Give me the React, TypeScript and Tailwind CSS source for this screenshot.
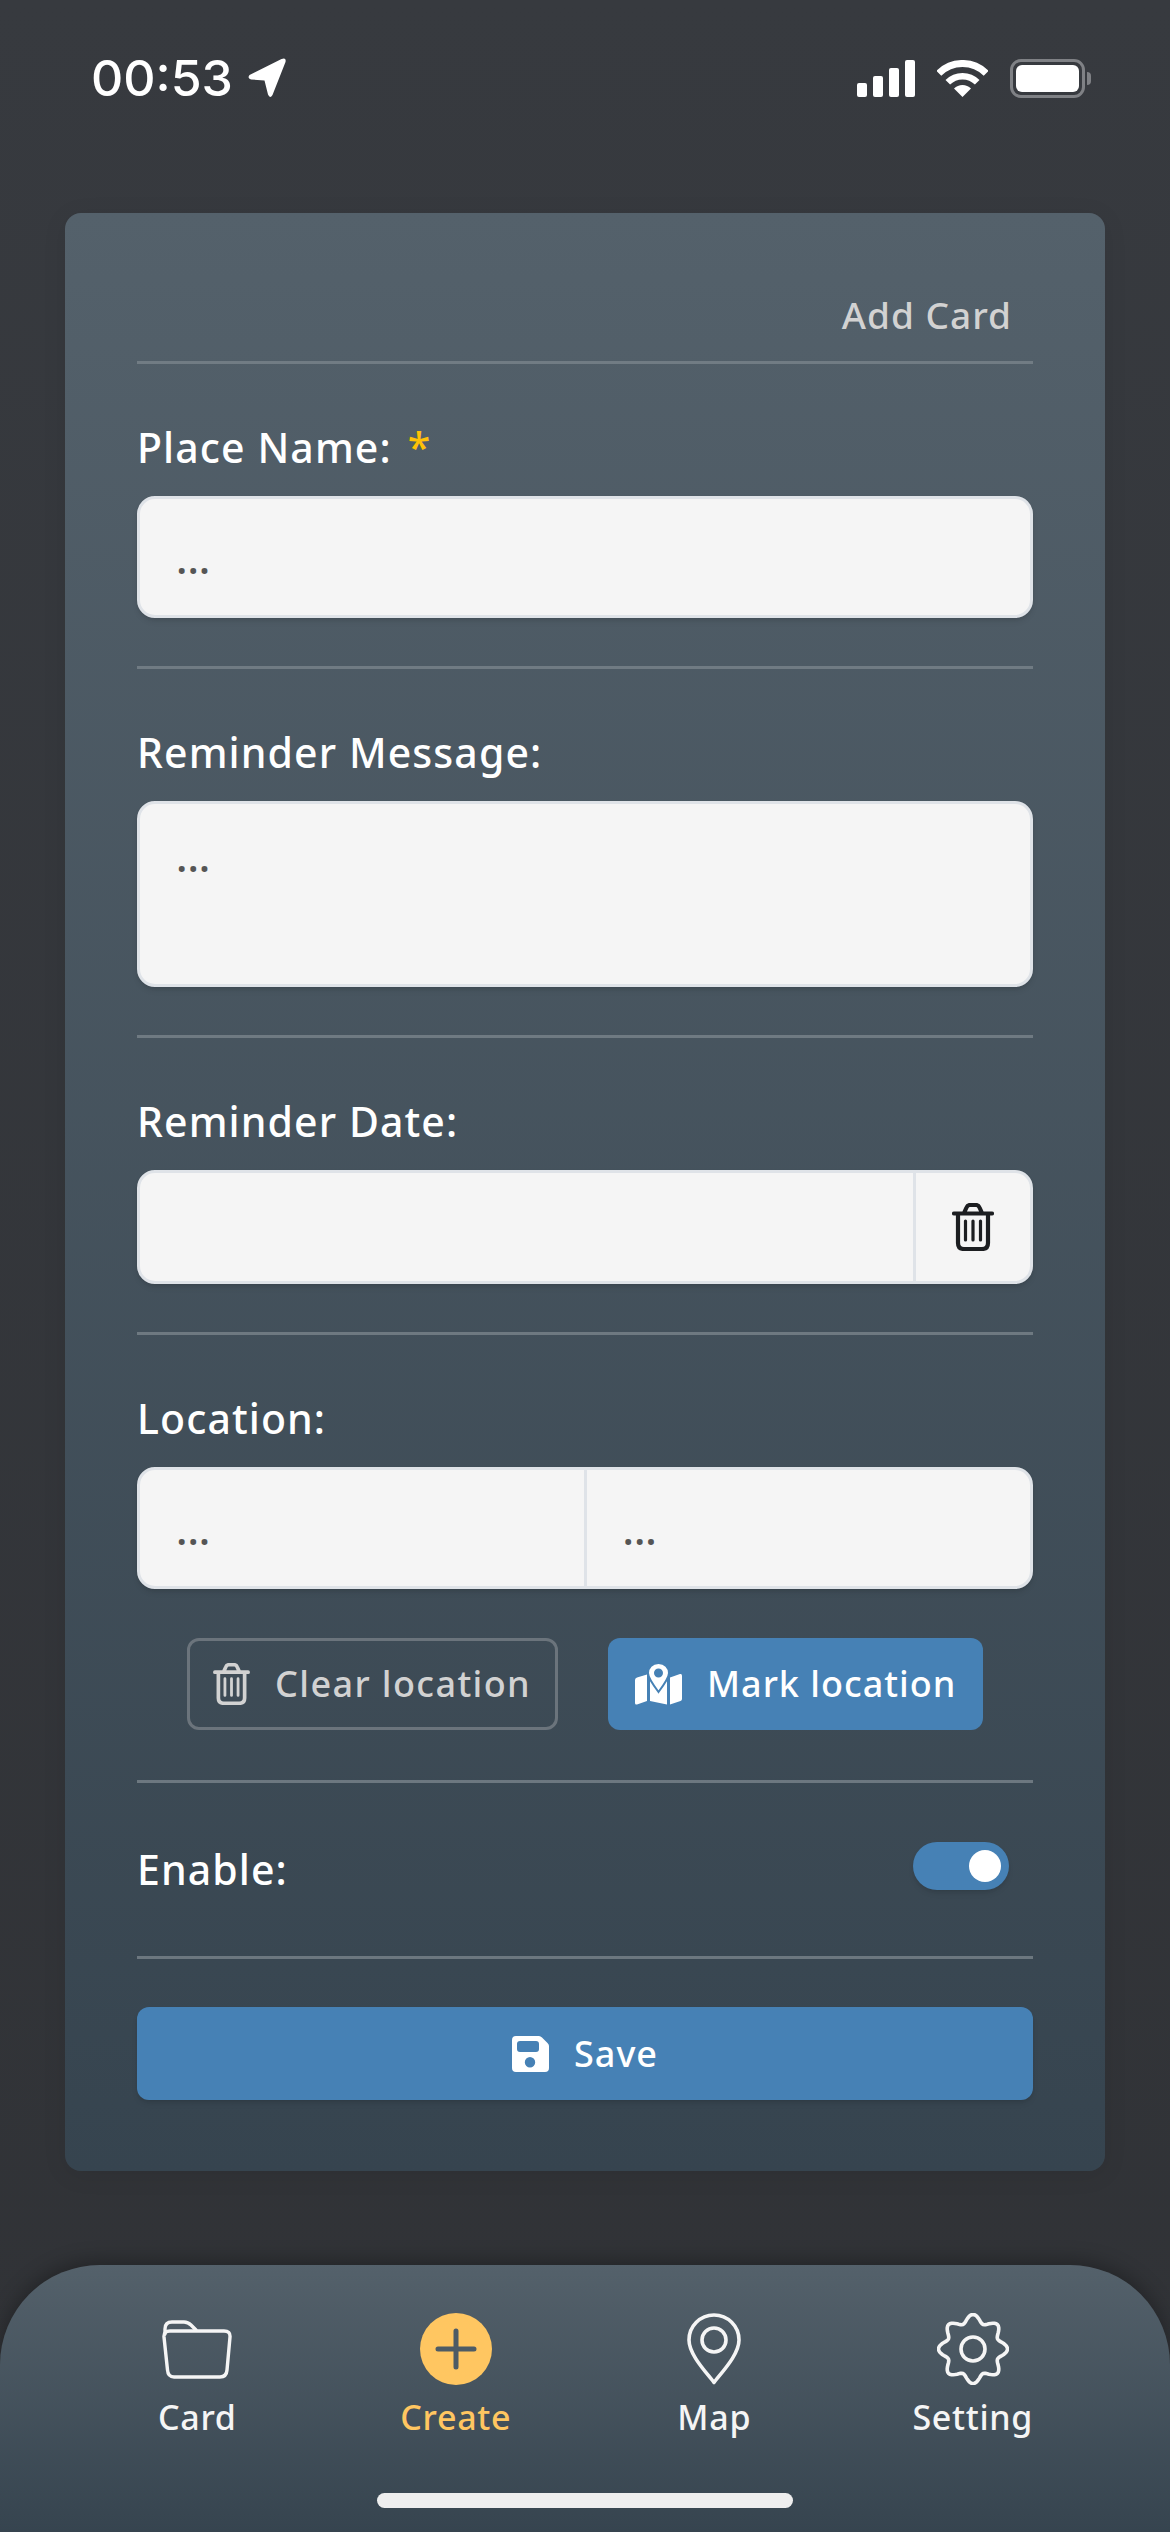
import React from 'react'

const gearPath = () => {
    const pts: string[] = []
    for (let i = 0; i < 144; i++) {
        const a = (i / 144) * Math.PI * 2
        const r = 30.5 + 4 * Math.cos(a * 8)
        pts.push(`${(36 + r * Math.sin(a)).toFixed(2)} ${(36 - r * Math.cos(a)).toFixed(2)}`)
    }
    return `M${pts.join('L')}Z`
}

const TrashIcon = ({ className }: { className: string }) => (
    <svg viewBox="0 0 42 48" className={className} fill="none" stroke="currentColor" strokeLinecap="round" strokeLinejoin="round">
        <path strokeWidth="4.2" d="M2 10.500H40M12 10 14.500 4.500Q15.500 2 18 2H24Q26.500 2 27.500 4.500L30 10M6 11V40Q6 46 12 46H30Q36 46 36 40V11" />
        <path strokeWidth="3.2" d="M13.500 18V37M21 18V37M28.500 18V37" />
    </svg>
)

const MapIcon = () => (
    <svg viewBox="0 0 47 42" className="w-[47px] h-[42px] shrink-0" fill="#fff">
        <path d="M0 17Q0 15 2 14.500L12 11.500V38L2 41.500Q0 42 0 40Z" />
        <path d="M35 14.500 45 11Q47 10.500 47 12.500V36Q47 37.500 45.500 38L35 41.500Z" />
        <path d="M15 14H32V41.500L15 38Z" />
        <path stroke="#4681b5" strokeWidth="2" fillRule="evenodd" d="M23.500 0C17 0 13 4.500 13 10C13 15 19 23 23.500 29C28 23 34 15 34 10C34 4.500 30 0 23.500 0ZM23.500 6.500A3.500 3.500 0 1 1 23.500 13.500A3.500 3.500 0 1 1 23.500 6.500Z" />
    </svg>
)

const SaveIcon = () => (
    <svg viewBox="0 0 37 36" className="w-[37px] h-[36px] shrink-0" fill="#fff">
        <path fillRule="evenodd" d="M4 0H27Q28.500 0 30 1.500L35.500 7Q37 8.500 37 10V32Q37 36 33 36H4Q0 36 0 32V4Q0 0 4 0ZM8 5Q5 5 5 8V13Q5 16 8 16H24Q27 16 27 13V8Q27 5 24 5ZM18 21A5.200 5.200 0 1 0 18 31.400A5.200 5.200 0 1 0 18 21Z" />
    </svg>
)

const FolderIcon = () => (
    <svg viewBox="0 0 70 59" className="w-[70px] h-[59px]" fill="none" stroke="#f5f5f5" strokeWidth="3.4" strokeLinejoin="round" strokeLinecap="round">
        <path d="M8 11H62Q68.500 11 68 17L65 50Q64.500 57 58 57H12Q6 57 5.500 50L2 17Q1.500 11 8 11Z" />
        <path d="M3 14V9Q3 2 10 2H22Q26 2 29 5L34 10" />
    </svg>
)

const PlusIcon = () => (
    <svg viewBox="0 0 72 72" className="w-[72px] h-[72px]">
        <circle cx="36" cy="36" r="36" fill="#ffc661" />
        <path d="M18 36H54M36 18V54" stroke="#4d5b65" strokeWidth="5" strokeLinecap="round" />
    </svg>
)

const PinIcon = () => (
    <svg viewBox="0 0 54 72" className="w-[54px] h-[72px]" fill="none" stroke="#f5f5f5" strokeWidth="3.6" strokeLinejoin="round">
        <path d="M27 69.500C20 60 2 42 2 27A25 25 0 0 1 52 27C52 42 34 60 27 69.500Z" />
        <circle cx="27" cy="27" r="12" />
    </svg>
)

const GearIcon = () => (
    <svg viewBox="0 0 72 72" className="w-[72px] h-[72px]" fill="none" stroke="#f5f5f5" strokeWidth="3.6">
        <path d={gearPath()} />
        <circle cx="36" cy="36" r="12" />
    </svg>
)

const StatusBar = () => (
    <div className="h-[213px] shrink-0 relative font-['Inter',sans-serif] text-white">
        <div className="flex items-center pl-[91px] pt-[50px]">
            <span className="text-[50px] leading-[56px] font-medium">00:53</span>
            <svg viewBox="0 0 40 40" className="w-[40px] h-[40px] ml-[14px]" fill="#fff">
                <path d="M2.500 17 34.500 1Q39.500-1 38.500 4L25.500 37Q23 41 21 36.500L17.500 22.500 4 21.500Q0 20.500 2.500 17Z" />
            </svg>
            <div className="flex items-center ml-auto pr-[79px]">
                <div className="flex items-end gap-[6px] h-[37px]">
                    <div className="w-[10px] h-[14px] bg-white rounded-[2px]" />
                    <div className="w-[10px] h-[21px] bg-white rounded-[2px]" />
                    <div className="w-[10px] h-[29px] bg-white rounded-[2px]" />
                    <div className="w-[10px] h-[37px] bg-white rounded-[2px]" />
                </div>
                <svg viewBox="0 0 51 37" className="w-[51px] h-[37px] ml-[22px]" fill="none" stroke="#fff">
                    <path strokeWidth="7" d="M1.800 13.300A33.500 33.500 0 0 1 49.200 13.300" />
                    <path strokeWidth="6.500" d="M10.800 22.300A20.800 20.800 0 0 1 40.200 22.300" />
                    <path fill="#fff" stroke="none" d="M25.500 37 17 28.500A12 12 0 0 1 34 28.500Z" />
                </svg>
                <div className="flex items-center ml-[22px]">
                    <div className="w-[75px] h-[39px] rounded-[11px] border-[3px] border-[#7f8185] p-[3px]">
                        <div className="w-full h-full bg-white rounded-[6px]" />
                    </div>
                    <div className="w-[4px] h-[13px] bg-[#7f8185] rounded-r-full ml-[2px]" />
                </div>
            </div>
        </div>
    </div>
)

const Label = ({ children }: { children: React.ReactNode }) => (
    <div className="h-[70px] mb-[14px] pt-[2px] flex items-center text-[41px] font-medium tracking-[1.1px] text-white">{children}</div>
)

const Divider = () => <div className="h-[3px] bg-[#79838b]/80" />

const inputClass = "min-w-0 flex-1 h-full bg-transparent outline-none pl-[36px] text-[42px] font-medium placeholder:text-[#555555]"

const TabItem = ({ icon, label, active }: { icon: React.ReactNode; label: string; active?: boolean }) => (
    <div className="flex-1 flex flex-col items-center">
        <div className="h-[72px] flex items-center justify-center">{icon}</div>
        <span className={`mt-[10px] text-[34px] leading-[44px] font-medium tracking-[0.7px] ${active ? 'text-[#ffc661]' : 'text-[#f5f5f5]'}`}>{label}</span>
    </div>
)

const App = () => {
    return (
        <div className="w-[1170px] h-[2532px] overflow-hidden flex flex-col bg-gradient-to-b from-[#373a3f] to-[#303236] font-['Noto_Sans',sans-serif]">
            <StatusBar />

            <div className="mx-[65px] h-[1958px] shrink-0 rounded-[16px] px-[72px] bg-gradient-to-b from-[#54616b] to-[#36444f] shadow-[0_4px_24px_rgba(0,0,0,0.08)]">
                <div className="h-[148px] flex items-end justify-end pb-[21px] pr-[21px] text-[37px] leading-[50px] font-medium tracking-[1px] text-[#d2d2d2]">
                    Add Card
                </div>
                <Divider />

                <div className="pt-[48px] pb-[48px]">
                    <Label>
                        Place Name:<span className="ml-[16px] text-[#ffc107]">*</span>
                    </Label>
                    <div className="h-[122px] rounded-[18px] border-[3px] border-[#dfe3e8] bg-[#f5f5f5] flex shadow-md">
                        <input className={inputClass} placeholder="..." />
                    </div>
                </div>
                <Divider />

                <div className="pt-[48px] pb-[48px]">
                    <Label>Reminder Message:</Label>
                    <textarea
                        className="block w-full h-[186px] resize-none rounded-[18px] border-[3px] border-[#dfe3e8] bg-[#f5f5f5] outline-none pl-[36px] pt-[30px] text-[42px] leading-[44px] font-medium placeholder:text-[#555555] shadow-md"
                        placeholder="..."
                    />
                </div>
                <Divider />

                <div className="pt-[48px] pb-[48px]">
                    <Label>Reminder Date:</Label>
                    <div className="h-[114px] rounded-[18px] border-[3px] border-[#dfe3e8] bg-[#f5f5f5] flex shadow-md">
                        <input className={inputClass} />
                        <div className="w-[117px] h-full border-l-[3px] border-[#dfe3e8] flex items-center justify-center text-[#1c1e21]">
                            <TrashIcon className="w-[42px] h-[48px]" />
                        </div>
                    </div>
                </div>
                <Divider />

                <div className="pt-[48px] pb-[50px]">
                    <Label>Location:</Label>
                    <div className="h-[122px] rounded-[18px] border-[3px] border-[#dfe3e8] bg-[#f5f5f5] flex shadow-md">
                        <input className={inputClass} placeholder="..." />
                        <input className={`${inputClass} border-l-[3px] border-[#dfe3e8]`} placeholder="..." />
                    </div>
                    <div className="flex justify-center gap-[50px] mt-[49px]">
                        <div className="w-[371px] h-[92px] rounded-[12px] border-[3px] border-[#6b747c] flex items-center pl-[23px] gap-[25px] text-[#d2d2d2]">
                            <TrashIcon className="w-[37px] h-[42px]" />
                            <span className="text-[36px] font-medium tracking-[1.4px] whitespace-nowrap">Clear location</span>
                        </div>
                        <div className="w-[375px] h-[92px] rounded-[12px] bg-[#4681b5] flex items-center pl-[27px] gap-[25px] text-white">
                            <MapIcon />
                            <span className="text-[36px] font-medium tracking-[1px] whitespace-nowrap">Mark location</span>
                        </div>
                    </div>
                </div>
                <Divider />

                <div className="h-[173px] flex items-center justify-between pr-[24px]">
                    <span className="text-[41px] font-medium tracking-[1.1px] text-white">Enable:</span>
                    <div className="w-[96px] h-[48px] mb-[8px] rounded-full bg-[#4681b5] flex items-center justify-end pr-[8px] shadow-md">
                        <div className="w-[32px] h-[32px] rounded-full bg-white" />
                    </div>
                </div>
                <Divider />

                <div className="h-[48px]" />
                <div className="h-[93px] rounded-[12px] bg-[#4681b5] flex items-center justify-center gap-[25px] text-white shadow-md">
                    <SaveIcon />
                    <span className="text-[36px] font-medium tracking-[1px]">Save</span>
                </div>
            </div>

            <div className="mt-auto h-[267px] shrink-0 rounded-t-[100px] px-[68px] pt-[48px] bg-gradient-to-b from-[#54616b] to-[#36444f] shadow-[0_-4px_20px_rgba(0,0,0,0.3)] flex flex-col">
                <div className="flex">
                    <TabItem icon={<FolderIcon />} label="Card" />
                    <TabItem icon={<PlusIcon />} label="Create" active />
                    <TabItem icon={<PinIcon />} label="Map" />
                    <TabItem icon={<GearIcon />} label="Setting" />
                </div>
                <div className="w-[416px] h-[15px] rounded-full bg-[#eeeeee] mx-auto mt-[54px]" />
            </div>
        </div>
    )
}

export default App
